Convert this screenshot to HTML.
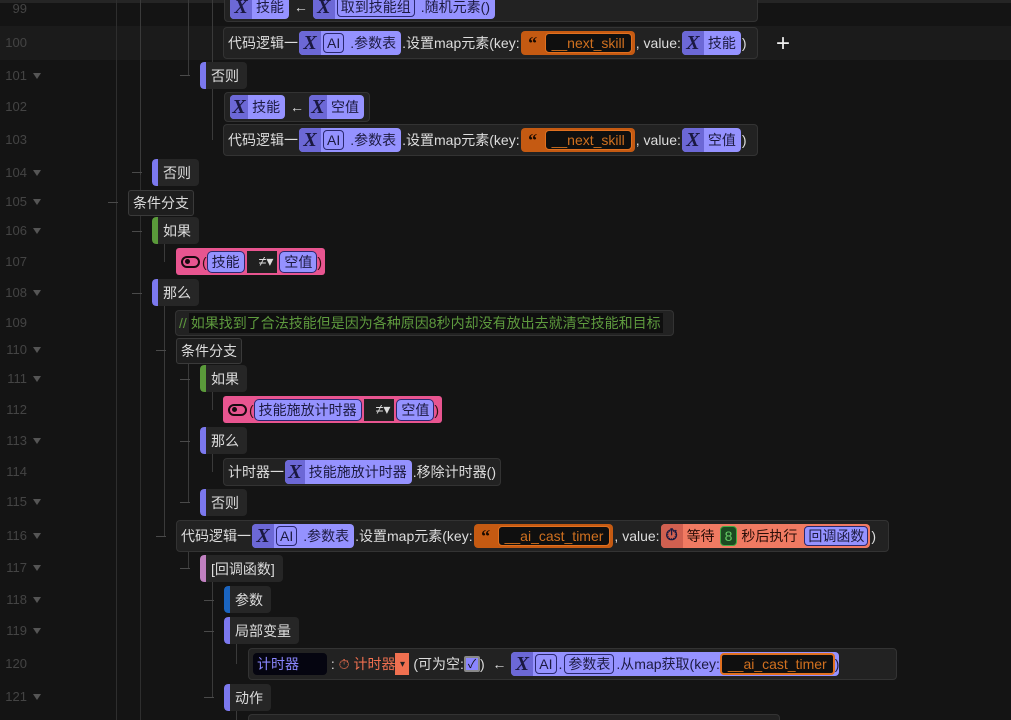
<!DOCTYPE html>
<html style="height:720px;overflow:hidden"><head><meta charset="utf-8"><style>
*{box-sizing:border-box;margin:0;padding:0}
html,body{width:1011px;height:720px;overflow:hidden}
body{background:#141414;font-family:"Liberation Sans","Noto Sans CJK SC",sans-serif;font-size:14px;color:#ddd;position:relative}
.a{position:absolute}
.ln{position:absolute;left:-3px;width:30px;color:#444;font-size:13px;text-align:right;line-height:16px}
.tri{position:absolute;left:33px;width:0;height:0;border-left:4px solid transparent;border-right:4px solid transparent;border-top:6px solid #555}
.vl{position:absolute;width:1px;background:#2e2e2e}
.hl{position:absolute;height:1px;width:10px;background:#4a4a4a}
.blk{position:absolute;background:#222;border:1px solid #333;border-radius:4px;display:flex;align-items:center;padding:0 4px;white-space:nowrap;height:30px;color:#ddd}
.tag{position:absolute;background:#262626;border-radius:4px;height:27px;display:flex;align-items:center;padding:0 8px 0 11px;color:#ddd;overflow:hidden}
.tag::before{content:"";position:absolute;left:0;top:0;bottom:0;width:6px;background:var(--c,#7b78ee);border-radius:4px 0 0 4px}
.br{position:absolute;background:#1e1e1e;border:1px solid #3a3a3a;border-radius:3px;height:26px;display:flex;align-items:center;padding:0 4px;color:#ddd}
.v{display:inline-flex;align-items:center;background:#9592ff;border-radius:4px;height:24px;color:#1c1a40;overflow:hidden;margin:0 1px}
.x{display:inline-flex;align-items:center;justify-content:center;width:22px;height:24px;background:#6c68d6;font-family:"Liberation Serif",serif;font-weight:bold;font-size:20px;color:#1a1840;font-style:italic}
.v .t{padding:0 5px 0 4px}
.ib{border:1px solid #2a2870;border-radius:4px;padding:0 3px;height:20px;display:inline-flex;align-items:center;margin:0 2px}
.s{display:inline-flex;align-items:center;background:#c55a12;border-radius:4px;height:24px;padding:0 3px 0 0;margin:0 1px}
.s .q{width:24px;text-align:center;color:#1a0a00;font-weight:bold;font-size:18px;font-family:"Liberation Serif",serif}
.s .in{background:#0f0f0f;border:1px solid #e07020;border-radius:4px;height:20px;padding:0 6px;color:#d0701f;display:flex;align-items:center}
.pk{position:absolute;background:#e85590;border-radius:3px;height:27px;display:flex;align-items:center;padding:0 3px;color:#311}
.eye{width:19px;height:12px;border:2.5px solid #1a0a10;border-radius:7px;position:relative;margin:0 2px}
.eye::after{content:"";position:absolute;left:2px;top:1px;width:5px;height:5px;background:#1a0a10;border-radius:50%}
.pv{display:inline-flex;align-items:center;background:#9592ff;border:1px solid #2a2870;border-radius:5px;height:22px;padding:0 4px;color:#1c1a40}
.op{display:inline-flex;align-items:center;background:#202020;height:22px;padding:0 4px 0 12px;color:#ddd;margin:0 2px}
</style></head><body>
<div class="a" style="left:0;top:0;width:1011px;height:3px;background:#252525"></div>
<div class="a" style="left:0;top:26px;width:1011px;height:34px;background:#1b1b1b"></div>

<div class="ln" style="top:1px">99</div>
<div class="ln" style="top:35px">100</div>
<div class="ln" style="top:68px">101</div><div class="tri" style="top:73px"></div>
<div class="ln" style="top:99px">102</div>
<div class="ln" style="top:132px">103</div>
<div class="ln" style="top:165px">104</div><div class="tri" style="top:170px"></div>
<div class="ln" style="top:194px">105</div><div class="tri" style="top:199px"></div>
<div class="ln" style="top:223px">106</div><div class="tri" style="top:228px"></div>
<div class="ln" style="top:254px">107</div>
<div class="ln" style="top:285px">108</div><div class="tri" style="top:290px"></div>
<div class="ln" style="top:315px">109</div>
<div class="ln" style="top:342px">110</div><div class="tri" style="top:347px"></div>
<div class="ln" style="top:371px">111</div><div class="tri" style="top:376px"></div>
<div class="ln" style="top:402px">112</div>
<div class="ln" style="top:433px">113</div><div class="tri" style="top:438px"></div>
<div class="ln" style="top:464px">114</div>
<div class="ln" style="top:494px">115</div><div class="tri" style="top:499px"></div>
<div class="ln" style="top:528px">116</div><div class="tri" style="top:533px"></div>
<div class="ln" style="top:560px">117</div><div class="tri" style="top:565px"></div>
<div class="ln" style="top:592px">118</div><div class="tri" style="top:597px"></div>
<div class="ln" style="top:623px">119</div><div class="tri" style="top:628px"></div>
<div class="ln" style="top:656px">120</div>
<div class="ln" style="top:689px">121</div><div class="tri" style="top:694px"></div>

<div class="vl" style="left:116px;top:0;height:720px"></div>
<div class="vl" style="left:140px;top:0;height:720px"></div>
<div class="vl" style="left:140px;top:0;height:175px;background:#3a3a3a"></div>
<div class="vl" style="left:188px;top:0;height:75px;background:#3a3a3a"></div>
<div class="vl" style="left:212px;top:0;height:140px;background:#3a3a3a"></div>
<div class="vl" style="left:164px;top:244px;height:18px;background:#3a3a3a"></div>
<div class="vl" style="left:164px;top:306px;height:230px;background:#3a3a3a"></div>
<div class="vl" style="left:188px;top:363px;height:140px;background:#3a3a3a"></div>
<div class="vl" style="left:212px;top:392px;height:18px;background:#3a3a3a"></div>
<div class="vl" style="left:212px;top:454px;height:18px;background:#3a3a3a"></div>
<div class="vl" style="left:188px;top:551px;height:17px;background:#3a3a3a"></div>
<div class="vl" style="left:212px;top:582px;height:115px;background:#3a3a3a"></div>
<div class="vl" style="left:236px;top:644px;height:20px;background:#3a3a3a"></div>
<div class="vl" style="left:236px;top:711px;height:9px;background:#3a3a3a"></div>
<div class="hl" style="left:180px;top:75px"></div>
<div class="hl" style="left:132px;top:172px"></div>
<div class="hl" style="left:108px;top:202px"></div>
<div class="hl" style="left:132px;top:231px"></div>
<div class="hl" style="left:132px;top:293px"></div>
<div class="hl" style="left:156px;top:350px"></div>
<div class="hl" style="left:180px;top:379px"></div>
<div class="hl" style="left:180px;top:441px"></div>
<div class="hl" style="left:180px;top:502px"></div>
<div class="hl" style="left:156px;top:536px"></div>
<div class="hl" style="left:180px;top:568px"></div>
<div class="hl" style="left:204px;top:600px"></div>
<div class="hl" style="left:204px;top:631px"></div>
<div class="hl" style="left:204px;top:697px"></div>

<div class="blk" style="left:224px;top:-8px;width:534px"><span class="v"><i class="x">X</i><span class="t">技能</span></span>&nbsp;←&nbsp;<span class="v"><i class="x">X</i><span class="ib">取到技能组</span><span class="t">.随机元素()</span></span></div>
<div class="blk" style="left:223px;top:27px;width:535px;height:32px">代码逻辑一<span class="v"><i class="x">X</i><span class="ib">AI</span><span class="t">.参数表</span></span>.设置map元素(key:<span class="s"><span class="q">“</span><span class="in">__next_skill</span></span>, value:<span class="v"><i class="x">X</i><span class="t">技能</span></span>)</div>
<div class="a" style="left:776px;top:30px;color:#eee;font-size:24px">+</div>
<div class="tag" style="left:200px;top:62px">否则</div>
<div class="blk" style="left:224px;top:92px;width:146px">
<span class="v"><i class="x">X</i><span class="t">技能</span></span>&nbsp;←&nbsp;<span class="v"><i class="x">X</i><span class="t">空值</span></span></div>
<div class="blk" style="left:223px;top:124px;width:535px;height:32px">代码逻辑一<span class="v"><i class="x">X</i><span class="ib">AI</span><span class="t">.参数表</span></span>.设置map元素(key:<span class="s"><span class="q">“</span><span class="in">__next_skill</span></span>, value:<span class="v"><i class="x">X</i><span class="t">空值</span></span>)</div>
<div class="tag" style="left:152px;top:159px">否则</div>
<div class="br" style="left:128px;top:190px">条件分支</div>
<div class="tag" style="left:152px;top:217px;--c:#5a9a3a">如果</div>
<div class="pk" style="left:176px;top:248px"><span class="eye"></span>(<span class="pv">技能</span><span class="op">≠▾</span><span class="pv">空值</span>)</div>
<div class="tag" style="left:152px;top:279px">那么</div>
<div class="blk" style="left:175px;top:310px;width:499px;height:26px;padding:0 3px;color:#5e9a3e"><span style="color:#5e9a3e">//</span><span style="background:#0f0f0f;padding:0 2px;margin-left:2px">如果找到了合法技能但是因为各种原因8秒内却没有放出去就清空技能和目标</span></div>
<div class="br" style="left:176px;top:338px">条件分支</div>
<div class="tag" style="left:200px;top:365px;--c:#5a9a3a">如果</div>
<div class="pk" style="left:223px;top:396px"><span class="eye"></span>(<span class="pv">技能施放计时器</span><span class="op">≠▾</span><span class="pv">空值</span>)</div>
<div class="tag" style="left:200px;top:427px">那么</div>
<div class="blk" style="left:223px;top:458px;width:278px;height:28px">计时器一<span class="v"><i class="x">X</i><span class="t">技能施放计时器</span></span>.移除计时器()</div>
<div class="tag" style="left:200px;top:489px">否则</div>
<div class="blk" style="left:176px;top:520px;width:713px;height:32px">代码逻辑一<span class="v"><i class="x">X</i><span class="ib">AI</span><span class="t">.参数表</span></span>.设置map元素(key:<span class="s"><span class="q">“</span><span class="in">__ai_cast_timer</span></span>, value:<span class="v" style="background:#f07a62;color:#2a0e08"><i class="x" style="background:#d06050;font-style:normal;font-size:16px">⏱</i><span class="t">等待</span><span style="background:#1c4a22;border:1px solid #4a4;border-radius:4px;color:#6c6;padding:0 4px;height:20px;display:inline-flex;align-items:center">8</span><span class="t">秒后执行</span><span class="ib" style="background:#9592ff;color:#1c1a40">回调函数</span></span>)</div>
<div class="tag" style="left:200px;top:555px;--c:#c080c0">[回调函数]</div>
<div class="tag" style="left:224px;top:586px;--c:#1a64c0">参数</div>
<div class="tag" style="left:224px;top:617px">局部变量</div>
<div class="blk" style="left:248px;top:648px;width:649px;height:32px"><span style="background:#050510;color:#8a86ff;border-radius:4px;padding:0 4px;width:74px;height:22px;display:inline-flex;align-items:center">计时器</span>&nbsp;:&nbsp;<span style="color:#f07050">⏱ 计时器</span><span style="background:#f07050;color:#222;height:22px;width:14px;display:inline-flex;align-items:center;justify-content:center;font-size:10px">▾</span>&nbsp;(可为空:<span style="display:inline-block;width:16px;height:16px;border:2px solid #888;border-radius:2px;background:#8a86ff;color:#111;font-size:12px;line-height:12px;text-align:center">✓</span>)&nbsp;&nbsp;←&nbsp;<span class="v"><i class="x">X</i><span class="ib">AI</span>.<span class="ib">参数表</span><span>.从map获取(key:</span><span style="background:#0f0f0f;border:2px solid #e07020;border-radius:4px;height:22px;padding:0 6px;color:#d0701f;display:flex;align-items:center">__ai_cast_timer</span>)</span></div>
<div class="tag" style="left:224px;top:684px">动作</div>
<div class="blk" style="left:248px;top:714px;width:532px;height:6px;border-bottom:none;border-radius:4px 4px 0 0"></div>
</body></html>
